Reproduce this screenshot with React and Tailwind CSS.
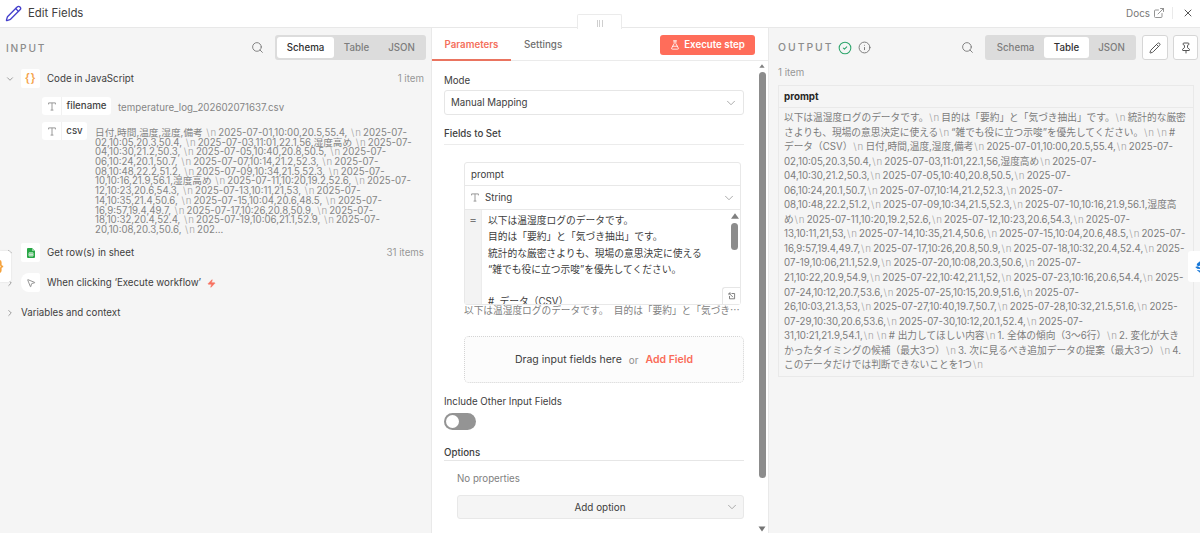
import React from "react";
import { Search, Pencil, X, ExternalLink, ChevronDown, ChevronRight, FlaskConical, CircleCheck, Info, Pin, MousePointer2, Zap } from "lucide-react";

const inputLines = [
  "日付,時間,温度,湿度,備考 ¶2025-07-01,10:00,20.5,55.4, ¶2025-07-",
  "02,10:05,20.3,50.4, ¶2025-07-03,11:01,22.1,56,湿度高め ¶2025-07-",
  "04,10:30,21.2,50.3, ¶2025-07-05,10:40,20.8,50.5, ¶2025-07-",
  "06,10:24,20.1,50.7, ¶2025-07-07,10:14,21.2,52.3, ¶2025-07-",
  "08,10:48,22.2,51.2, ¶2025-07-09,10:34,21.5,52.3, ¶2025-07-",
  "10,10:16,21.9,56.1,湿度高め ¶2025-07-11,10:20,19.2,52.6, ¶2025-07-",
  "12,10:23,20.6,54.3, ¶2025-07-13,10:11,21,53, ¶2025-07-",
  "14,10:35,21.4,50.6, ¶2025-07-15,10:04,20.6,48.5, ¶2025-07-",
  "16,9:57,19.4,49.7, ¶2025-07-17,10:26,20.8,50.9, ¶2025-07-",
  "18,10:32,20.4,52.4, ¶2025-07-19,10:06,21.1,52.9, ¶2025-07-",
  "20,10:08,20.3,50.6, ¶202...",
];

const outputLines = [
  "以下は温湿度ログのデータです。¶目的は「要約」と「気づき抽出」です。¶統計的な厳密",
  "さよりも、現場の意思決定に使える¶“雑でも役に立つ示唆”を優先してください。¶¶#",
  "データ（CSV）¶日付,時間,温度,湿度,備考¶2025-07-01,10:00,20.5,55.4,¶2025-07-",
  "02,10:05,20.3,50.4,¶2025-07-03,11:01,22.1,56,湿度高め¶2025-07-",
  "04,10:30,21.2,50.3,¶2025-07-05,10:40,20.8,50.5,¶2025-07-",
  "06,10:24,20.1,50.7,¶2025-07-07,10:14,21.2,52.3,¶2025-07-",
  "08,10:48,22.2,51.2,¶2025-07-09,10:34,21.5,52.3,¶2025-07-10,10:16,21.9,56.1,湿度高",
  "め¶2025-07-11,10:20,19.2,52.6,¶2025-07-12,10:23,20.6,54.3,¶2025-07-",
  "13,10:11,21,53,¶2025-07-14,10:35,21.4,50.6,¶2025-07-15,10:04,20.6,48.5,¶2025-07-",
  "16,9:57,19.4,49.7,¶2025-07-17,10:26,20.8,50.9,¶2025-07-18,10:32,20.4,52.4,¶2025-",
  "07-19,10:06,21.1,52.9,¶2025-07-20,10:08,20.3,50.6,¶2025-07-",
  "21,10:22,20.9,54.9,¶2025-07-22,10:42,21.1,52,¶2025-07-23,10:16,20.6,54.4,¶2025-",
  "07-24,10:12,20.7,53.6,¶2025-07-25,10:15,20.9,51.6,¶2025-07-",
  "26,10:03,21.3,53,¶2025-07-27,10:40,19.7,50.7,¶2025-07-28,10:32,21.5,51.6,¶2025-",
  "07-29,10:30,20.6,53.6,¶2025-07-30,10:12,20.1,52.4,¶2025-07-",
  "31,10:21,21.9,54.1,¶¶# 出力してほしい内容¶1. 全体の傾向（3〜6行）¶2. 変化が大き",
  "かったタイミングの候補（最大3つ）¶3. 次に見るべき追加データの提案（最大3つ）¶4.",
  "このデータだけでは判断できないことを1つ¶",
];

const editorLines = [
  "以下は温湿度ログのデータです。",
  "目的は「要約」と「気づき抽出」です。",
  "統計的な厳密さよりも、現場の意思決定に使える",
  "“雑でも役に立つ示唆”を優先してください。",
  "",
  "# データ（CSV）",
];

function TextLine({ text, className }) {
  const parts = text.split("¶");
  return (
    <div className={"whitespace-pre " + className}>
      {parts.map((part, i) => (
        <React.Fragment key={i}>
          {i > 0 && (
            <span className="mr-[1.2px] ml-[0.9px] tracking-[0.9px] font-light text-[#a2a2a2]">{"\\n"}</span>
          )}
          {part}
        </React.Fragment>
      ))}
    </div>
  );
}

function Segmented({ active }) {
  const items = [["Schema", "w-[57px]"], ["Table", "w-[45px]"], ["JSON", "w-[45px]"]];
  return (
    <div className="flex h-[25px] w-[151px] items-center rounded-[3px] bg-[#dcdcdc] px-[2px] font-medium text-[#7d7d7d]">
      {items.map(([name, width]) => (
        <div
          key={name}
          className={"flex h-[21px] items-center justify-center rounded-[3px] pt-px " + width + (name === active ? " bg-white text-[#2f2f2f]" : "")}
        >
          {name}
        </div>
      ))}
    </div>
  );
}

function TypeGlyph() {
  return (
    <svg width="8" height="9" viewBox="0 0 8 9" fill="none" stroke="#8f8f8f" strokeWidth="0.9">
      <path d="M.6 2.4V.9H7.4V2.4M4 .9V8M2.6 8.1H5.4" />
    </svg>
  );
}

function Pill({ label, width }) {
  return (
    <div className={"flex h-[18px] rounded-[3px] bg-white font-medium text-[#444] " + width}>
      <div className="flex w-[20px] items-center justify-center border-r border-[#f1f1f1]"><TypeGlyph /></div>
      <div className="flex flex-1 items-center justify-center">{label}</div>
    </div>
  );
}

function NodeIcon({ children, className = "" }) {
  return <div className={"flex h-[19px] w-[19px] shrink-0 items-center justify-center rounded-[2px] bg-white " + className}>{children}</div>;
}

function InputPanel() {
  return (
    <section className="relative w-[431px] shrink-0 bg-[#f5f5f5]">
      <div className="flex h-[39px] items-center pr-[5px] pl-[6px]">
        <span className="pt-px text-[10.2px] font-medium tracking-[1.8px] text-[#8c8c8c]">INPUT</span>
        <Search className="mr-[11px] ml-auto" size={13} strokeWidth={1.7} color="#7a7a7a" />
        <Segmented active="Schema" />
      </div>
      <div className="mt-[1px] flex h-[21px] items-center pr-[7px] pl-[5px]">
        <ChevronDown size={10} strokeWidth={2} color="#8a8a8a" />
        <NodeIcon className="ml-[6px]">
          <span className="pb-px text-[11.5px] font-semibold tracking-[0.6px] text-[#f5a34a]">{"{}"}</span>
        </NodeIcon>
        <span className="ml-[7px] pt-px">Code in JavaScript</span>
        <span className="ml-auto pt-px text-[#979797]">1 item</span>
      </div>
      <div className="mt-[8px] ml-[42px] flex h-[18px] items-center">
        <Pill label="filename" width="w-[69px]" />
        <span className="mt-[3px] ml-[7px] text-[#858585]">temperature_log_202602071637.csv</span>
      </div>
      <div className="mt-[7px] ml-[42px] flex h-[116px]">
        <Pill label="csv" width="w-[45px]" />
        <div className="mt-[6px] ml-[8px] text-[9.67px] text-[#858585]">
          {inputLines.map((l) => <TextLine key={l} text={l} className="h-[9.7px] leading-[9.7px]" />)}
        </div>
      </div>
      <div className="mt-[4px] flex h-[21px] items-center pr-[7px] pl-[5px]">
        <ChevronRight size={10} strokeWidth={2} color="#8a8a8a" />
        <NodeIcon className="ml-[6px]">
          <svg width="8" height="10" viewBox="0 0 8 10">
            <path d="M1 0H5L8 3V9A1 1 0 0 1 7 10H1A1 1 0 0 1 0 9V1A1 1 0 0 1 1 0Z" fill="#28a745" />
            <path d="M5 0V3H8Z" fill="#8fd19e" />
            <path d="M2 4.8H6V8H2ZM2 6.4H6M4 4.8V8" fill="none" stroke="#fff" strokeWidth="0.7" />
          </svg>
        </NodeIcon>
        <span className="ml-[7px] pt-px">Get row(s) in sheet</span>
        <span className="ml-auto pt-px text-[#979797]">31 items</span>
      </div>
      <div className="mt-[9px] flex h-[21px] items-center pl-[5px]">
        <ChevronRight size={10} strokeWidth={2} color="#8a8a8a" />
        <NodeIcon className="ml-[6px] rounded-l-[8px]">
          <MousePointer2 size={10} strokeWidth={2} color="#808080" />
        </NodeIcon>
        <span className="ml-[7px] pt-px">When clicking ‘Execute workflow’</span>
        <Zap className="mt-px ml-[6px]" size={9} strokeWidth={1.5} color="#f8705f" fill="#f8705f" />
      </div>
      <div className="mt-[9px] flex h-[21px] items-center pl-[5px]">
        <ChevronRight size={10} strokeWidth={2} color="#8a8a8a" />
        <span className="ml-[6px] pt-px">Variables and context</span>
      </div>
      <div className="absolute top-[223px] left-0 flex h-[31px] w-[11px] items-center rounded-r-[3px] bg-white shadow-[0_0_2px_rgba(0,0,0,0.12)]">
        <svg width="4" height="13" viewBox="0 0 4 13" fill="none" stroke="#f5a23c" strokeWidth="1.6">
          <path d="M-1 .8Q.8 .8 .8 2.5V4.8Q.8 6.5 3.2 6.5Q.8 6.5 .8 8.2V10.5Q.8 12.2 -1 12.2" />
        </svg>
      </div>
    </section>
  );
}

function ParametersPanel() {
  return (
    <section className="relative flex w-[338px] shrink-0 flex-col border-x border-[#e9e9e9] bg-white">
      <div className="absolute top-[-14px] left-[145px] flex h-[15px] w-[45px] items-center justify-center gap-[1.5px] rounded-t-[2px] border border-b-0 border-[#ebebeb] bg-white pt-[2px]">
        <i className="h-[7px] w-px bg-[#cfcfcf]" />
        <i className="h-[7px] w-px bg-[#cfcfcf]" />
        <i className="h-[7px] w-px bg-[#cfcfcf]" />
      </div>
      <div className="flex h-[33px] shrink-0 border-b border-[#ebebeb] font-medium">
        <div className="flex h-[33px] w-[79px] items-center justify-center border-b-2 border-[#ea7460] pt-[2px] font-semibold text-[#f4705c]">Parameters</div>
        <div className="ml-[13px] flex h-[31px] items-center pt-[2px] text-[9.8px] text-[#6f6f6f]">Settings</div>
        <div className="mt-[7px] mr-[13px] ml-auto flex h-[20px] w-[95px] items-center justify-center gap-[4px] rounded-[3px] bg-[#ff6d5a] font-semibold text-white">
          <FlaskConical size={10} strokeWidth={2} />
          Execute step
        </div>
      </div>
      <div className="flex h-[471px]">
        <div className="w-[312px] shrink-0 pt-[11px] pl-[12px]">
          <div className="h-[16px] pt-px leading-[16px]">Mode</div>
          <div className="mt-[2px] flex h-[25px] items-center justify-between rounded-[3px] border border-[#e6e6e6] pr-[5px] pl-[6px]">
            Manual Mapping
            <ChevronDown size={14} strokeWidth={1.4} color="#999" />
          </div>
          <div className="mt-[10px] h-[20px] border-b border-[#ececec] pt-px leading-[16px] font-medium">Fields to Set</div>
          <div className="mt-[17px] ml-[20px] w-[277px] rounded-[3px] border border-[#e8e8e8]">
            <div className="flex h-[23px] items-center border-b border-[#e8e8e8] pt-px pl-[6px]">prompt</div>
            <div className="flex h-[24px] items-center border-b border-[#e8e8e8] pr-[4px] pl-[6px]">
              <TypeGlyph />
              <span className="ml-[6px]">String</span>
              <ChevronDown className="ml-auto" size={14} strokeWidth={1.4} color="#999" />
            </div>
            <div className="relative flex h-[94px] overflow-hidden">
              <div className="w-[17px] shrink-0 border-r border-[#ececec] bg-[#f3f3f3] pt-[2px] text-center text-[11.5px] leading-[16px] text-[#777]">=</div>
              <div className="pt-[3px] pl-[6px] text-[9.75px] text-[#3c3c3c] [word-spacing:2.5px]">
                {editorLines.map((l, i) => <div key={i} className="h-[16.3px] leading-[16.3px] whitespace-pre">{l}</div>)}
              </div>
              <div className="ml-auto flex w-[11px] shrink-0 flex-col items-center pt-[3px]">
                <svg width="8" height="6" viewBox="0 0 8 6"><path d="M4 .2L8 5.8H0Z" fill="#808080" /></svg>
                <div className="mt-[4px] h-[27px] w-[7px] rounded-full bg-[#8c8c8c]" />
              </div>
              <div className="absolute right-0 bottom-0 flex h-[17px] w-[18px] items-center justify-center rounded-tl-[3px] border-t border-l border-[#e6e6e6] bg-white">
                <svg width="8" height="8" viewBox="0 0 8 8" fill="none" stroke="#757575" strokeWidth="0.9">
                  <path d="M3.5 1.5H6.6V6.8H1.5V4M5 5.2L1 1.2M1 3.1V1.1H2.9" />
                </svg>
              </div>
            </div>
          </div>
          <div className="ml-[20px] h-[14px] w-[280px] overflow-hidden text-[9.7px] leading-[12px] whitespace-pre text-[#7f7f7f]">以下は温湿度ログのデータです。  目的は「要約」と「気づき⋯</div>
          <div className="mt-[17px] ml-[20px] flex h-[47px] w-[280px] items-center justify-center rounded-[5px] border border-dotted border-[#d4d4d4] bg-[#fcfcfc] pt-px text-[10.5px]">
            <span>Drag input fields here</span>
            <span className="mx-[7px] text-[9.9px] text-[#909090]">or</span>
            <span className="font-semibold text-[#fa6b58]">Add Field</span>
          </div>
          <div className="mt-[10px] h-[16px] pt-px leading-[16px]">Include Other Input Fields</div>
          <div className="mt-[4px] flex h-[17px] w-[32px] items-center rounded-full bg-[#949494] px-[2px]">
            <div className="h-[13px] w-[13px] rounded-full bg-white" />
          </div>
          <div className="mt-[14px] h-[17px] border-b border-[#e6e6e6] pt-px leading-[16px] font-medium">Options</div>
          <div className="mt-[10px] ml-[13px] h-[16px] leading-[16px] text-[#7f7f7f]">No properties</div>
          <div className="mt-[8px] ml-[13px] flex h-[24px] items-center rounded-[3px] border border-[#e8e8e8] bg-[#f5f5f5] text-[9.9px]">
            <div className="flex-1" />
            <span className="ml-[3px]">Add option</span>
            <div className="flex flex-1 justify-end pr-[4px]"><ChevronDown size={14} strokeWidth={1.4} color="#999" /></div>
          </div>
        </div>
        <div className="ml-[13px] flex w-[10px] flex-col items-center pt-[3px]">
          <svg width="8" height="6" viewBox="0 0 8 6"><path d="M4 .2L8 5.8H0Z" fill="#808080" /></svg>
          <div className="mt-[4px] h-[406px] w-[7px] shrink-0 rounded-full bg-[#8c8c8c]" />
          <svg className="mt-[48px] shrink-0" width="8" height="6" viewBox="0 0 8 6"><path d="M4 5.5L7.5 .5H.5Z" fill="#757575" /></svg>
        </div>
      </div>
    </section>
  );
}

function OutputPanel() {
  return (
    <section className="relative flex-1 bg-[#f5f5f5] pl-[9px]">
      <div className="flex h-[39px] items-center pr-[2px]">
        <span className="w-[60px] pt-px text-[10.4px] font-medium tracking-[2px] text-[#8c8c8c]">OUTPUT</span>
        <CircleCheck size={14} strokeWidth={1.8} color="#2ea56c" />
        <Info className="ml-[6px]" size={13} strokeWidth={1.8} color="#7a7a7a" />
        <Search className="mr-[11px] ml-auto" size={13} strokeWidth={1.7} color="#7a7a7a" />
        <Segmented active="Table" />
        <div className="ml-[6px] flex h-[25px] w-[26px] items-center justify-center rounded-[3px] border border-[#d6d6d6] bg-white">
          <Pencil size={12} strokeWidth={2} color="#555" />
        </div>
        <div className="ml-[5px] flex h-[25px] w-[25px] items-center justify-center rounded-[3px] border border-[#d6d6d6] bg-white">
          <Pin size={12} strokeWidth={2} color="#555" />
        </div>
      </div>
      <div className="h-[18px] leading-[12px] text-[#979797]">1 item</div>
      <div className="h-[292px] w-[416px] border border-[#e9e9e9]">
        <div className="flex h-[22px] items-center border-b border-[#e9e9e9] pl-[5px] text-[9.8px] font-bold text-[#262626]">prompt</div>
        <div className="pt-[3px] pl-[5px] text-[9.7px] text-[#7c7c7c]">
          {outputLines.map((l) => <TextLine key={l} text={l} className="h-[14.56px] leading-[14.56px]" />)}
        </div>
      </div>
      <div className="absolute top-[223px] right-0 flex h-[31px] w-[12px] items-center justify-end rounded-l-[3px] bg-white">
        <svg width="5" height="12" viewBox="0 0 5 12" fill="#1878d8">
          <path d="M2.2 2.5L5 .3V4.6L3.8 5.2L1.6 4.2ZM.2 6L2.5 5.2L5 6.6V8L2.3 7.8ZM1.5 8.7L5 9.4V11.8Z" />
        </svg>
      </div>
    </section>
  );
}

export default function App() {
  return (
    <div className="flex h-[533px] w-[1200px] flex-col overflow-hidden bg-white font-['Inter','Noto_Sans_CJK_JP',sans-serif] text-[9.72px] leading-[12px] text-[#404040]">
      <header className="flex h-[28px] shrink-0 items-center pr-[6px] pb-[2px] pl-[5px]">
        <Pencil size={17} strokeWidth={1.9} color="#4540cc" />
        <h1 className="ml-[6px] text-[11.4px]">Edit Fields</h1>
        <span className="ml-auto text-[9.9px] text-[#777]">Docs</span>
        <ExternalLink className="ml-[3px]" size={12} strokeWidth={1.8} color="#888" />
        <i className="ml-[7px] h-[12px] w-px bg-[#eaeaea]" />
        <X className="ml-[9px]" size={12} strokeWidth={2} color="#555" />
      </header>
      <main className="flex h-[505px] shadow-[0_-1px_0_#e8e8e8]">
        <InputPanel />
        <ParametersPanel />
        <OutputPanel />
      </main>
    </div>
  );
}
